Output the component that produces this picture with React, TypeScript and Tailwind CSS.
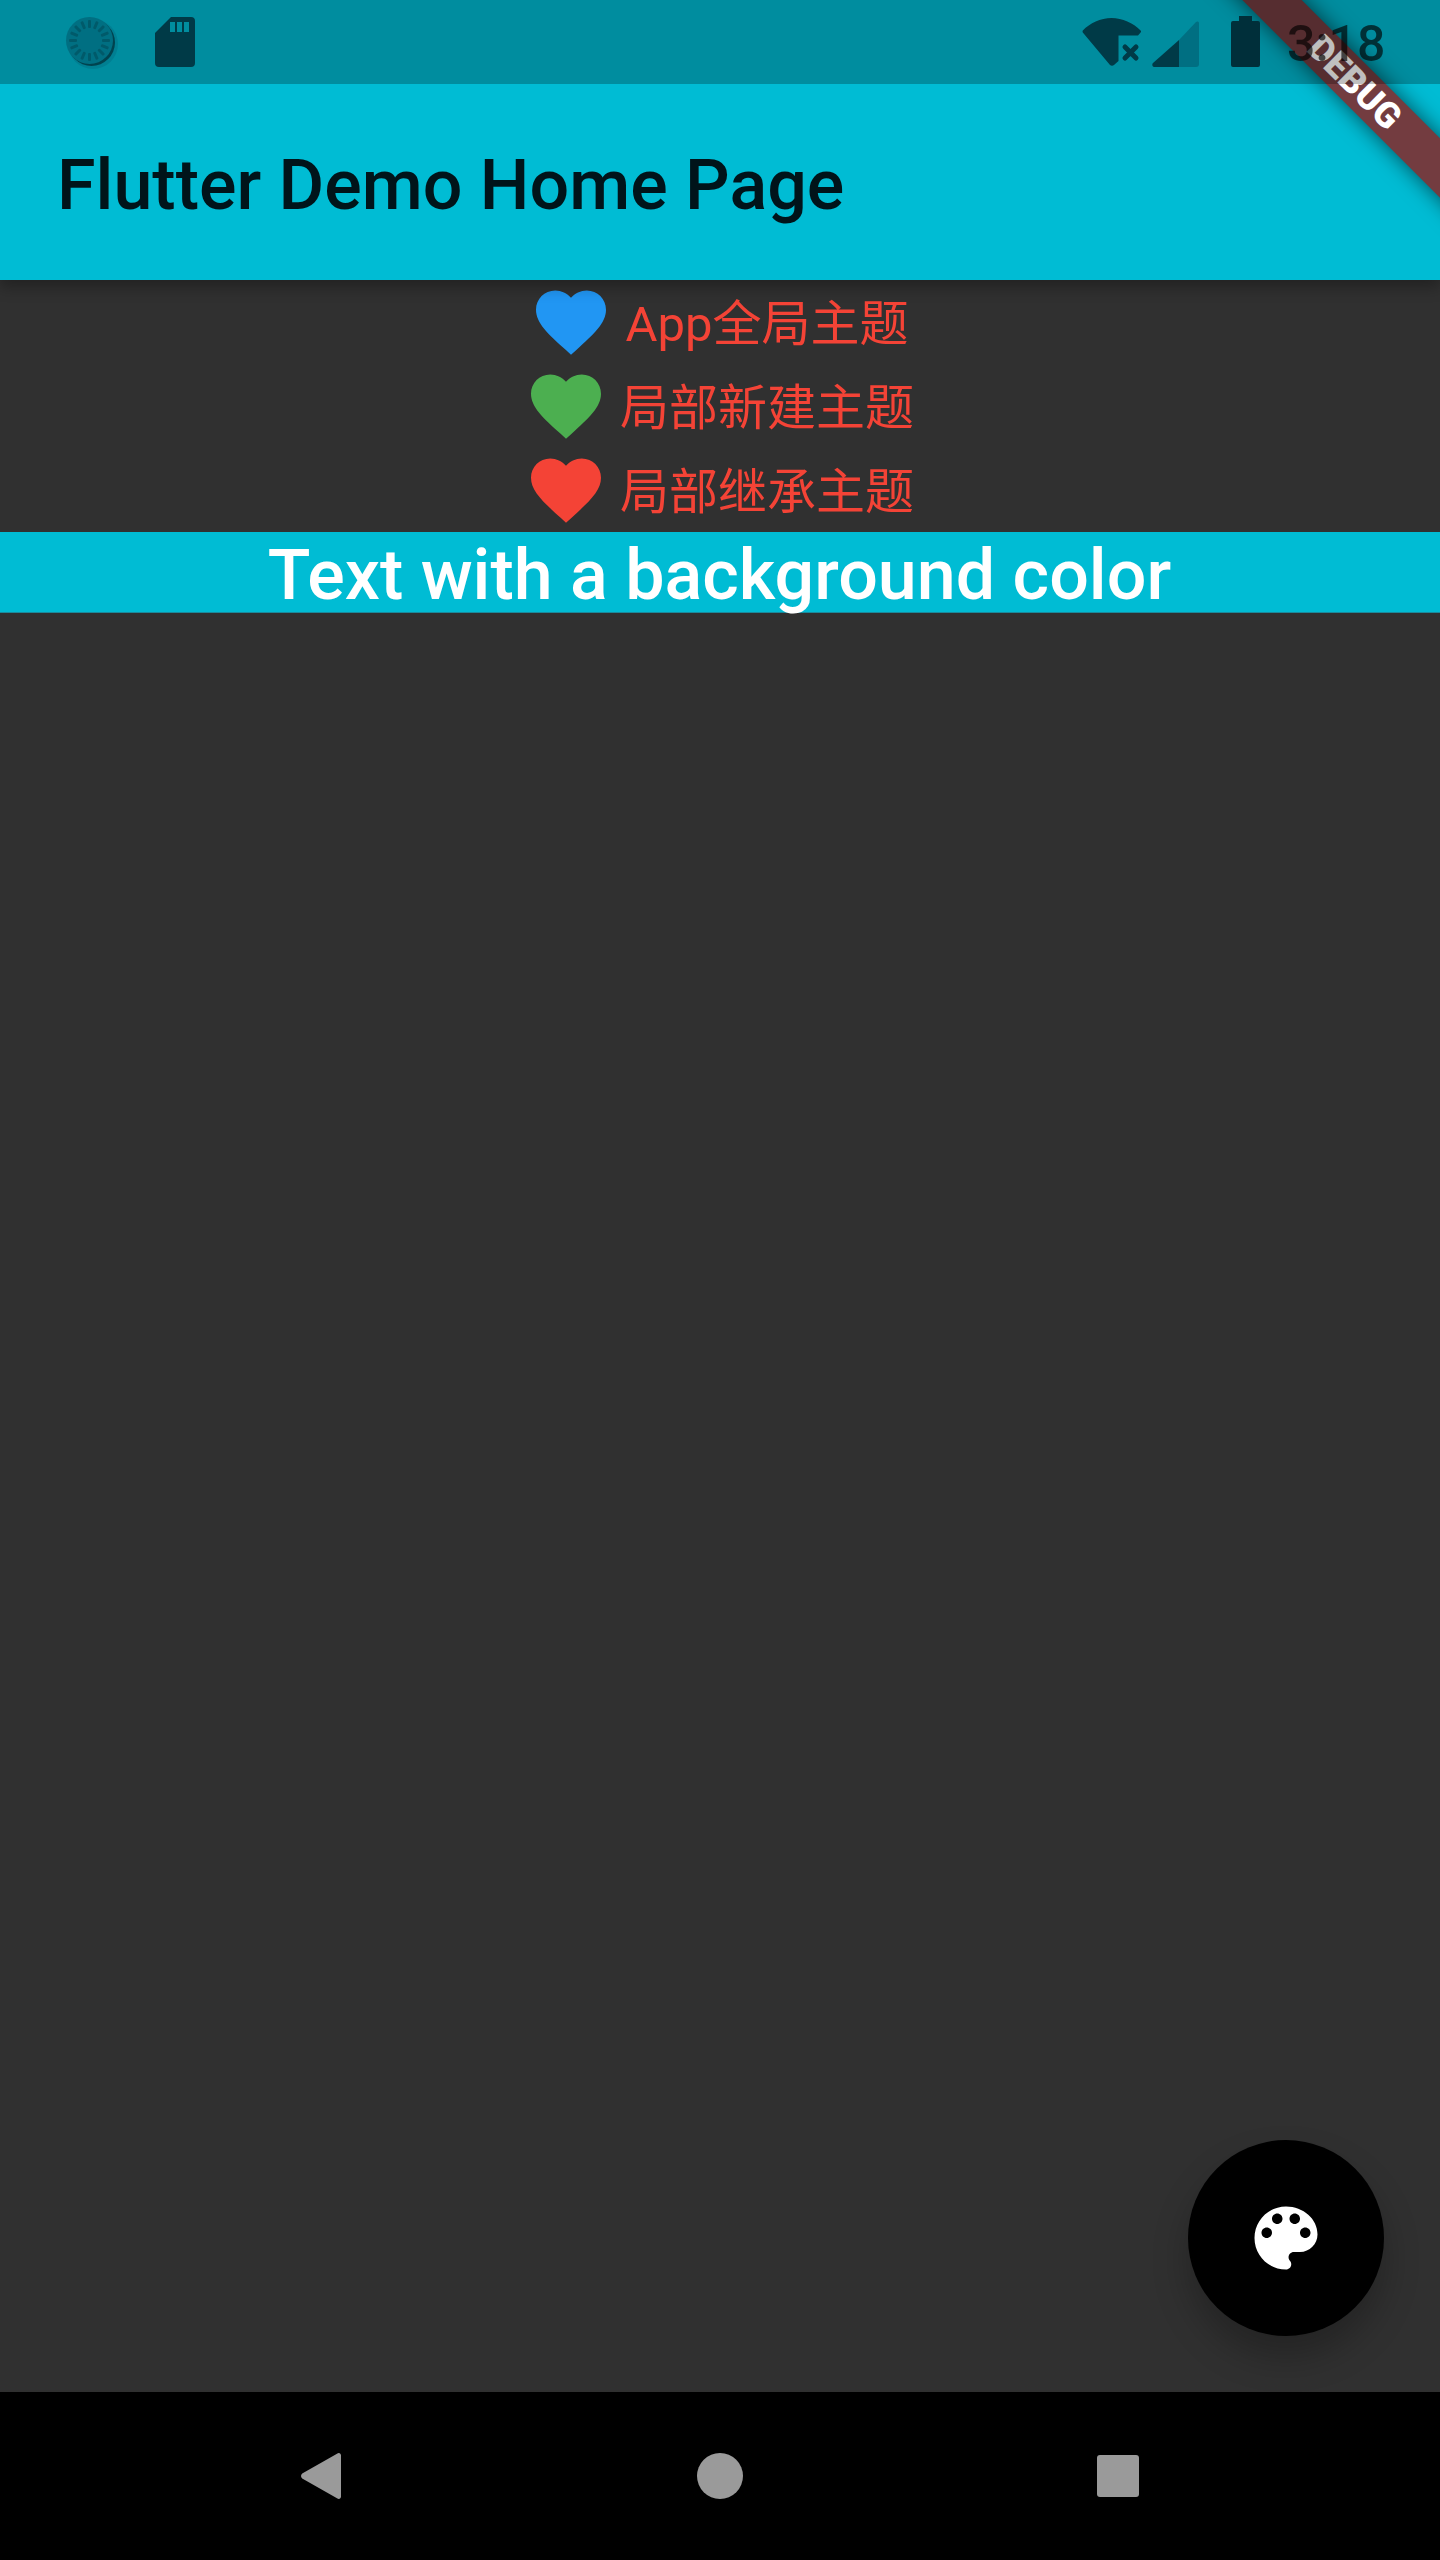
import React from "react";

const HEART =
  "M12 21.35l-1.45-1.32C5.4 15.36 2 12.28 2 8.5 2 5.42 4.42 3 7.5 3c1.74 0 3.41.81 4.5 2.09C13.09 3.81 14.76 3 16.5 3 19.58 3 22 5.42 22 8.5c0 3.78-3.4 6.86-8.55 11.54L12 21.35z";
const PALETTE =
  "M12 3c-4.97 0-9 4.03-9 9s4.03 9 9 9c.83 0 1.5-.67 1.5-1.5 0-.39-.15-.74-.39-1.01-.23-.26-.38-.61-.38-.99 0-.83.67-1.5 1.5-1.5H16c2.76 0 5-2.24 5-5 0-4.42-4.03-8-9-8zm-5.5 9c-.83 0-1.5-.67-1.5-1.5S5.67 9 6.5 9 8 9.67 8 10.5 7.33 12 6.5 12zm3-4C8.67 8 8 7.33 8 6.5S8.67 5 9.5 5s1.5.67 1.5 1.5S10.33 8 9.5 8zm5 0c-.83 0-1.5-.67-1.5-1.5S13.67 5 14.5 5s1.5.67 1.5 1.5S15.33 8 14.5 8zm3 4c-.83 0-1.5-.67-1.5-1.5S16.67 9 17.5 9s1.5.67 1.5 1.5-.67 1.5-1.5 1.5z";

const ThemeRow: React.FC<{ color: string; label: string }> = ({ color, label }) => (
  <div className="flex h-[84px] items-center justify-center pr-[2px]">
    <svg viewBox="0 0 24 24" className="h-[84px] w-[84px]" fill={color}>
      <path d={HEART} />
    </svg>
    <span className="whitespace-pre pt-[6px] text-[49px] leading-[84px] text-[#f44336]"> {label}</span>
  </div>
);

const Spinner = () => {
  const ticks = Array.from({ length: 16 }, (_, i) => i * 22.5);
  return (
    <svg viewBox="0 0 54 54" className="h-[54px] w-[54px]">
      <circle cx="28" cy="28" r="25" fill="#007f92" />
      <circle cx="26.5" cy="26.5" r="23.5" fill="#00434f" />
      <circle cx="24.5" cy="24.5" r="23.5" fill="#006f82" />
      {ticks.map((deg) => (
        <rect key={deg} x="23" y="4" width="3" height="8" rx="1" fill="#005a6a" transform={`rotate(${deg} 24.5 24.5)`} />
      ))}
    </svg>
  );
};

const SdCard = () => (
  <svg viewBox="0 0 40 50" className="h-[50px] w-[40px]">
    <path
      fill="#003a47"
      fillRule="evenodd"
      d="M16 0h20a4 4 0 0 1 4 4v42a4 4 0 0 1-4 4H4a4 4 0 0 1-4-4V16zM15 5v10h5V5zm7 0v10h5V5zm7 0v10h5V5z"
    />
  </svg>
);

const WifiOff = () => (
  <svg viewBox="0 0 60 48" className="h-[48px] w-[60px]">
    <path
      fill="#003a47"
      d="M0.8 12.5C8 5 18.5 0 29.5 0S51 5 58.6 12.4c.6.6.6 1.3.2 1.8L56 17.5H36.5V43L32 47c-1.2 1-2.8 1-4 0L1 14.8c-.5-.6-.6-1.6-.2-2.3z"
    />
    <path fill="none" stroke="#003a47" strokeWidth="5" strokeLinecap="round" d="M43 29l11 11M54 29L43 40" />
  </svg>
);

const Signal = () => (
  <svg viewBox="0 0 47 47" className="h-[47px] w-[47px]">
    <path fill="#006f82" d="M27 20 L44 2c1.2-1.2 3-.5 3 1v41a3 3 0 0 1-3 3H27z" />
    <path fill="#003a47" d="M27 20v27H3c-2.5 0-3.5-2.5-2-4z" />
  </svg>
);

const Battery = () => (
  <svg viewBox="0 0 29 51" className="h-[51px] w-[29px]">
    <path fill="#002f3a" d="M8 0h13v5h6a2 2 0 0 1 2 2v42a2 2 0 0 1-2 2H2a2 2 0 0 1-2-2V7a2 2 0 0 1 2-2h6z" />
  </svg>
);

export default function App() {
  return (
    <div className="relative flex h-[2560px] w-[1440px] flex-col overflow-hidden bg-[#303030] font-['Roboto','Noto_Sans_CJK_SC',sans-serif]">
      <header className="relative z-10 flex h-[280px] items-end bg-[#00bcd4] pb-[53px] pl-[57px] shadow-[0_7px_14px_rgba(0,0,0,0.3)]">
        <h1 className="text-[70px] font-medium leading-[84px] text-[#00141a]">Flutter Demo Home Page</h1>
      </header>

      <main className="relative flex-1">
        <ThemeRow color="#2196f3" label="App全局主题" />
        <ThemeRow color="#4caf50" label="局部新建主题" />
        <ThemeRow color="#f44336" label="局部继承主题" />
        <div className="box-content flex h-[80px] items-center justify-center border-b border-[#1b8a9c] bg-[#00bcd4] pr-[1px] text-[70px] font-medium leading-[80px] text-white">
          <span className="pt-[6px]">Text with a background color</span>
        </div>
        <button
          type="button"
          className="absolute bottom-[56px] right-[56px] flex h-[196px] w-[196px] items-center justify-center rounded-full bg-black shadow-[0_21px_35px_rgba(0,0,0,0.25)]"
        >
          <svg viewBox="0 0 24 24" className="h-[84px] w-[84px]" fill="#fff" fillRule="evenodd">
            <path d={PALETTE} />
          </svg>
        </button>
      </main>

      <nav className="flex h-[168px] items-center justify-between bg-black pl-[301px] pr-[301px]">
        <svg viewBox="0 0 40 46" className="h-[46px] w-[40px]">
          <path
            fill="#9a9a9a"
            d="M36 .8c1.7-1.5 4-.6 4 1.7v41c0 2.3-2.3 3.2-4 1.7L1.2 25.5c-1.6-1.4-1.6-3.6 0-5z"
          />
        </svg>
        <div className="ml-[2px] h-[46px] w-[46px] rounded-full bg-[#9a9a9a]" />
        <div className="h-[42px] w-[42px] rounded-[3px] bg-[#9a9a9a]" />
      </nav>

      <div className="pointer-events-none absolute right-0 top-0 z-20 h-[300px] w-[300px] overflow-hidden">
        <div className="absolute left-[-34px] top-[63px] flex h-[42px] w-[500px] rotate-45 items-center justify-center bg-[#733c40] pr-[4px] text-[36px] font-black leading-[38px] text-white shadow-[0_0_21px_rgba(0,0,0,0.6)]">
          DEBUG
        </div>
      </div>

      <div className="absolute left-0 top-0 z-30 flex h-[84px] w-full items-start bg-black/25">
        <div className="ml-[65px] mt-[16px]">
          <Spinner />
        </div>
        <div className="ml-[36px] mt-[17px]">
          <SdCard />
        </div>
        <div className="ml-auto mr-[298px] mt-[18px]">
          <WifiOff />
        </div>
        <div className="absolute left-[1152px] top-[20px]">
          <Signal />
        </div>
        <div className="absolute left-[1231px] top-[16px]">
          <Battery />
        </div>
        <span className="absolute left-[1287px] top-[15px] text-[50px] font-medium leading-[58px] text-black/65">3:18</span>
      </div>
    </div>
  );
}
